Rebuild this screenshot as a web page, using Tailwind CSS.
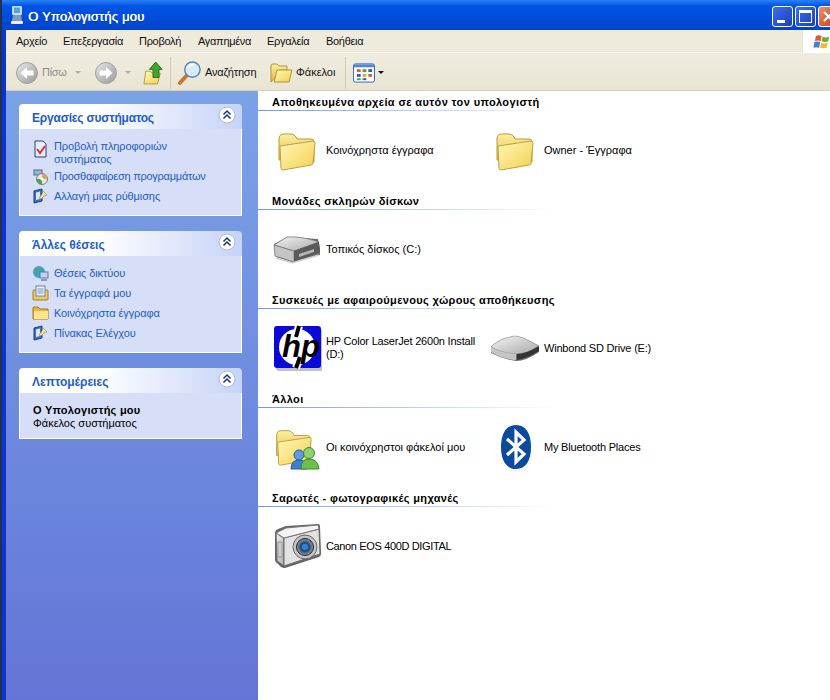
<!DOCTYPE html>
<html lang="el">
<head>
  <meta charset="UTF-8" />
  <title>Ο Υπολογιστής μου</title>
  <script src="https://cdn.jsdelivr.net/npm/@tailwindcss/browser@4"></script>
</head>
<body class="m-0 overflow-hidden bg-[#22304f] font-['Liberation_Sans',Arial,sans-serif] text-[11px] leading-[13px]">

<!-- shared gradients and icons -->
<svg class="absolute w-0 h-0">
  <defs>
    <linearGradient id="fold" x1="0" y1="0" x2="1" y2="1"><stop offset="0" stop-color="#fff8b8"/><stop offset="1" stop-color="#f4cf52"/></linearGradient>
    <linearGradient id="foldback" x1="0" y1="0" x2="0" y2="1"><stop offset="0" stop-color="#fdf0a0"/><stop offset="1" stop-color="#e0b840"/></linearGradient>
    <linearGradient id="disk" x1="0" y1="0" x2="1" y2="1"><stop offset="0" stop-color="#f4f4f4"/><stop offset="1" stop-color="#a9a9a9"/></linearGradient>
    <linearGradient id="nav" x1="0" y1="0" x2="1" y2="1"><stop offset="0" stop-color="#e8e8e8"/><stop offset="1" stop-color="#999"/></linearGradient>
    <radialGradient id="lens"><stop offset="0" stop-color="#2f7fe0"/><stop offset="0.5" stop-color="#24476f"/><stop offset="1" stop-color="#9aa3ab"/></radialGradient>
    <symbol id="folder" viewBox="0 0 48 48">
      <path d="M7 34 V13 q0-5 5-5 h7 q3 0 5 3 l1 2 h14 q3 0 3 3 v20 z" fill="url(#foldback)" stroke="#b99a36"/>
      <path d="M8 20 L41 15 q2 0 2 2 L41 37 q0 2-2 2 L11 44 q-2 0-2-2 z" fill="url(#fold)" stroke="#bfa03c"/>
    </symbol>
    <symbol id="panelapp" viewBox="0 0 16 16">
      <path d="M2 3 L10 1 V13 L2 15 z" fill="#3f6fc8" stroke="#1c3a7c"/>
      <path d="M4 4.500 L8 3.500 V11 L4 12 z" fill="#dce6f6"/>
      <path d="M7 10 L10 6 L11 3 L15 7 L12 8 L9 11 z" fill="#f4e49a" stroke="#7b8c3e" stroke-width="0.600"/>
    </symbol>
  </defs>
</svg>

<div class="w-[830px] h-[700px] ml-[2px] flex flex-col overflow-hidden">

  <!-- title bar -->
  <div class="h-[30px] shrink-0 flex items-center bg-gradient-to-b from-[#2a80f4] via-[#0054e6] via-20% to-[#0044cc] relative">
    <svg class="ml-[7px] w-[16px] h-[20px]" viewBox="0 0 16 20">
      <rect x="3" y="1" width="10" height="9" rx="1" fill="#bfe0f6"/>
      <rect x="5" y="2.500" width="6" height="5.500" fill="#5aa0e0"/>
      <path d="M4 10 h8 l1 6 h-10 z" fill="#7f9cbc"/>
      <rect x="2" y="16" width="12" height="3" rx="1" fill="#e6edf4"/>
    </svg>
    <span class="ml-[3px] mt-[2px] text-white text-[13px] leading-none tracking-[0.2px] [text-shadow:0.4px_0_0_#fff,1px_1px_0_#0f3a9c]">Ο Υπολογιστής μου</span>
    <div class="absolute left-[770px] top-[6px] flex gap-[2px]">
      <div class="w-[21px] h-[21px] rounded-[3px] border border-white bg-[linear-gradient(135deg,#3c6fe8,#1a3fc0)] relative">
        <div class="absolute left-[4px] top-[13px] w-[8px] h-[3px] bg-white"></div>
      </div>
      <div class="w-[21px] h-[21px] rounded-[3px] border border-white bg-[linear-gradient(135deg,#3c6fe8,#1a3fc0)] relative">
        <div class="absolute left-[3px] top-[3px] w-[13px] h-[13px] border border-white border-t-[3px]"></div>
      </div>
      <div class="w-[21px] h-[21px] rounded-[3px] border border-white bg-[linear-gradient(135deg,#e89070,#c63a18)] relative">
        <svg class="absolute left-[3px] top-[3px] w-[13px] h-[13px]" viewBox="0 0 13 13"><path d="M2 2 L11 11 M11 2 L2 11" stroke="#fff" stroke-width="2.200"/></svg>
      </div>
    </div>
  </div>

  <div class="flex-1 min-h-0 flex flex-col border-l-[4px] border-[#0a35d4]">

    <!-- menu bar -->
    <div class="h-[23px] shrink-0 flex items-center bg-[#efebdc] border-b border-[#f8f6ee] text-[#111] tracking-[-0.3px] relative">
      <div class="pl-[10px] w-[57px]">Αρχείο</div>
      <div class="w-[76px]">Επεξεργασία</div>
      <div class="w-[59px]">Προβολή</div>
      <div class="w-[69px]">Αγαπημένα</div>
      <div class="w-[59px]">Εργαλεία</div>
      <div>Βοήθεια</div>
      <div class="absolute left-[796px] top-0 w-[30px] h-[23px] bg-white border-l border-[#e8e4d4] flex items-center">
        <svg class="ml-[10px] w-[20px] h-[18px]" viewBox="0 0 20 18">
          <path d="M3 3 q3-2 6 0 l-1 5 q-3-1-6 0 z" fill="#e2572b"/>
          <path d="M10 3.500 q3 1.500 7 0 l-1 5 q-3 1-7 0 z" fill="#6cae34"/>
          <path d="M1.500 9 q3-1 6 0 l-1 6 q-3-1-6 0 z" fill="#3f7fd8"/>
          <path d="M8.500 10 q3 1 7 0 l-1 5 q-3 1-7 0 z" fill="#f4b92c"/>
        </svg>
      </div>
    </div>

    <!-- toolbar -->
    <div class="h-[38px] shrink-0 pt-[2px] flex items-center bg-gradient-to-b from-[#f0ede0] to-[#e9e5d4] border-b border-[#d4d0bc] text-[#111]">
      <svg class="ml-[10px] w-[22px] h-[22px]" viewBox="0 0 22 22">
        <circle cx="11" cy="11" r="10.500" fill="url(#nav)" stroke="#a0a0a0"/>
        <path d="M4.500 11 L11 5 V8.500 H17.500 V13.500 H11 V17 z" fill="#fff"/>
      </svg>
      <span class="ml-[4px] w-[30px] text-[#8d8d86] tracking-[-0.3px]">Πίσω</span>
      <svg class="ml-[3px] w-[6px] h-[4px]" viewBox="0 0 6 4"><path d="M0 0 H6 L3 3 z" fill="#b0aea0"/></svg>
      <svg class="ml-[14px] w-[22px] h-[22px]" viewBox="0 0 22 22">
        <circle cx="11" cy="11" r="10.500" fill="url(#nav)" stroke="#a0a0a0"/>
        <path d="M17.500 11 L11 5 V8.500 H4.500 V13.500 H11 V17 z" fill="#fff"/>
      </svg>
      <svg class="ml-[8px] w-[6px] h-[4px]" viewBox="0 0 6 4"><path d="M0 0 H6 L3 3 z" fill="#b0aea0"/></svg>
      <svg class="ml-[12px] w-[20px] h-[24px]" viewBox="0 0 22 26">
        <path d="M3 11 h5 l2 2 h9 l-3 12 H1 z" fill="url(#fold)" stroke="#b39432"/>
        <path d="M14 1 L21 9 H17.500 V18 H11 V9 H7 z" fill="#3fa52c" stroke="#1d6b1a"/>
      </svg>
      <div class="ml-[7px] w-px h-[32px] bg-[#cfcbb8]"></div>
      <svg class="ml-[6px] w-[25px] h-[25px]" viewBox="0 0 26 26">
        <path d="M3 24 L11 15" stroke="#c9772d" stroke-width="4" stroke-linecap="round"/>
        <circle cx="16" cy="10" r="8" fill="#d6ecfa" stroke="#5c86b4" stroke-width="1.500"/>
        <path d="M11 8 q3-4 7-3" stroke="#fff" stroke-width="2" fill="none"/>
      </svg>
      <span class="ml-[3px] w-[60px] tracking-[-0.2px]">Αναζήτηση</span>
      <svg class="ml-[4px] w-[24px] h-[22px]" viewBox="0 0 24 22">
        <path d="M2 20 V4 q0-2 2-2 h4 l2 2 h8 v4 h-6 z" fill="url(#foldback)" stroke="#b39432"/>
        <path d="M5 20 L8 8 H23 L20 20 z" fill="url(#fold)" stroke="#b39432"/>
      </svg>
      <span class="ml-[3px] w-[45px]">Φάκελοι</span>
      <div class="ml-[4px] w-px h-[32px] bg-[#cfcbb8]"></div>
      <svg class="ml-[7px] w-[22px] h-[20px]" viewBox="0 0 23 20">
        <rect x="0.500" y="0.500" width="22" height="19" rx="2" fill="#fff" stroke="#2f5fb8"/>
        <rect x="1" y="1" width="21" height="3" fill="#4f86dc"/>
        <rect x="4" y="6" width="4" height="3" fill="#d9622f"/><rect x="10" y="6" width="4" height="3" fill="#4aa83a"/><rect x="16" y="6" width="4" height="3" fill="#2f5fb8"/>
        <rect x="4" y="11" width="4" height="3" fill="#2f5fb8"/><rect x="10" y="11" width="4" height="3" fill="#e4a82c"/><rect x="16" y="11" width="4" height="3" fill="#d9622f"/>
        <rect x="4" y="15.500" width="4" height="2" fill="#4aa83a"/><rect x="10" y="15.500" width="4" height="2" fill="#2f5fb8"/>
      </svg>
      <svg class="ml-[3px] w-[6px] h-[4px]" viewBox="0 0 6 4"><path d="M0 0 H6 L3 3 z" fill="#111"/></svg>
    </div>

    <div class="flex-1 min-h-0 flex">

      <!-- task sidebar -->
      <div class="w-[252px] shrink-0 pt-[13px] pl-[13px] flex flex-col gap-[15px] bg-gradient-to-b from-[#7ba2e7] to-[#6375d6]">

        <div class="w-[223px]">
          <div class="h-[25px] flex items-center justify-between pl-[13px] pr-[6px] rounded-t-[4px] bg-gradient-to-r from-white via-white via-35% to-[#c6d3f7]">
            <span class="mt-[3px] text-[12px] font-bold text-[#215dc6] tracking-[-0.2px]">Εργασίες συστήματος</span>
            <svg class="w-[18px] h-[18px] mb-[3px]" viewBox="0 0 18 18">
              <circle cx="9" cy="9" r="8" fill="#fff" stroke="#a9b9e4"/>
              <path d="M5.500 8.500 L9 5 L12.500 8.500 M5.500 12.500 L9 9 L12.500 12.500" fill="none" stroke="#16357c" stroke-width="1.500"/>
            </svg>
          </div>
          <div class="bg-[#d6dff7] border-x border-b border-white pl-[12px] pt-[11px] pb-[9px] text-[#215dc6] tracking-[-0.1px]">
            <div class="flex h-[26px]">
              <svg class="w-[16px] h-[18px] shrink-0" viewBox="0 0 16 18">
                <path d="M3 1 h8 l3 3 v13 H3 z" fill="#e8eef8" stroke="#24407c"/>
                <path d="M5 9 L8 13 L13 6" fill="none" stroke="#d8323a" stroke-width="2"/>
              </svg>
              <span class="ml-[6px] w-[140px]">Προβολή πληροφοριών συστήματος</span>
            </div>
            <div class="flex items-center h-[20px]">
              <svg class="w-[17px] h-[17px] shrink-0" viewBox="0 0 17 17">
                <rect x="2" y="2" width="8" height="5" fill="#9cb4d8" stroke="#4e6a94"/>
                <circle cx="10" cy="11" r="5.500" fill="#e8e8f0" stroke="#6a7a94"/>
                <path d="M10 11 L10 5.500 A5.500 5.500 0 0 1 15.500 11 z" fill="#d8a848"/>
                <path d="M10 11 L4.500 11 A5.500 5.500 0 0 0 10 16.500 z" fill="#58a048"/>
                <circle cx="10" cy="11" r="1.500" fill="#fff"/>
              </svg>
              <span class="ml-[5px] tracking-[-0.25px]">Προσθαφαίρεση προγραμμάτων</span>
            </div>
            <div class="flex items-center h-[20px]">
              <svg class="w-[16px] h-[16px] shrink-0"><use href="#panelapp"/></svg>
              <span class="ml-[6px]">Αλλαγή μιας ρύθμισης</span>
            </div>
          </div>
        </div>

        <div class="w-[223px]">
          <div class="h-[25px] flex items-center justify-between pl-[13px] pr-[6px] rounded-t-[4px] bg-gradient-to-r from-white via-white via-35% to-[#c6d3f7]">
            <span class="mt-[3px] text-[12px] font-bold text-[#215dc6]">Άλλες θέσεις</span>
            <svg class="w-[18px] h-[18px] mb-[3px]" viewBox="0 0 18 18">
              <circle cx="9" cy="9" r="8" fill="#fff" stroke="#a9b9e4"/>
              <path d="M5.500 8.500 L9 5 L12.500 8.500 M5.500 12.500 L9 9 L12.500 12.500" fill="none" stroke="#16357c" stroke-width="1.500"/>
            </svg>
          </div>
          <div class="bg-[#d6dff7] border-x border-b border-white pl-[12px] pt-[7px] pb-[9px] text-[#215dc6] tracking-[-0.1px]">
            <div class="flex items-center h-[20px]">
              <svg class="w-[17px] h-[17px] shrink-0" viewBox="0 0 17 17">
                <circle cx="7" cy="7" r="6" fill="#3f9fd8"/>
                <path d="M3 3 q3 1 3 4 l-3 2 z M8 2 l3 3 -3 2 z" fill="#5aa83f"/>
                <rect x="8" y="7" width="8" height="6" fill="#bcd4f0" stroke="#5a7ca8"/>
                <rect x="9" y="14" width="6" height="2" fill="#8a96b4"/>
              </svg>
              <span class="ml-[5px]">Θέσεις δικτύου</span>
            </div>
            <div class="flex items-center h-[20px]">
              <svg class="w-[17px] h-[16px] shrink-0" viewBox="0 0 17 16">
                <rect x="1" y="5" width="15" height="10" rx="1" fill="#f0c860" stroke="#a07c28"/>
                <rect x="4" y="1" width="9" height="10" fill="#f0f4fa" stroke="#6a84a8"/>
                <path d="M5.500 4 h6 M5.500 6 h6 M5.500 8 h6" stroke="#6a94c8"/>
              </svg>
              <span class="ml-[5px]">Τα έγγραφά μου</span>
            </div>
            <div class="flex items-center h-[20px]">
              <svg class="w-[17px] h-[14px] shrink-0" viewBox="0 0 17 14">
                <path d="M1 13 V2 q0-1 1-1 h4 l2 2 h8 v10 z" fill="#e8b83c" stroke="#9a7820"/>
                <rect x="2" y="5" width="14" height="8" fill="#fbe48c"/>
              </svg>
              <span class="ml-[5px]">Κοινόχρηστα έγγραφα</span>
            </div>
            <div class="flex items-center h-[20px]">
              <svg class="w-[16px] h-[16px] shrink-0"><use href="#panelapp"/></svg>
              <span class="ml-[6px]">Πίνακας Ελέγχου</span>
            </div>
          </div>
        </div>

        <div class="w-[223px]">
          <div class="h-[25px] flex items-center justify-between pl-[13px] pr-[6px] rounded-t-[4px] bg-gradient-to-r from-white via-white via-35% to-[#c6d3f7]">
            <span class="mt-[3px] text-[12px] font-bold text-[#215dc6]">Λεπτομέρειες</span>
            <svg class="w-[18px] h-[18px] mb-[3px]" viewBox="0 0 18 18">
              <circle cx="9" cy="9" r="8" fill="#fff" stroke="#a9b9e4"/>
              <path d="M5.500 8.500 L9 5 L12.500 8.500 M5.500 12.500 L9 9 L12.500 12.500" fill="none" stroke="#16357c" stroke-width="1.500"/>
            </svg>
          </div>
          <div class="bg-[#d6dff7] border-x border-b border-white pl-[13px] pt-[11px] pb-[8px] text-black">
            <div class="font-bold tracking-[0.25px]">Ο Υπολογιστής μου</div>
            <div>Φάκελος συστήματος</div>
          </div>
        </div>
      </div>

      <!-- drive list -->
      <div class="flex-1 bg-white text-black">

        <section class="h-[99px]">
          <div class="h-[19px] pl-[14px] pt-[5px] font-bold tracking-[0.38px]">Αποθηκευμένα αρχεία σε αυτόν τον υπολογιστή</div>
          <div class="h-px w-[297px] bg-gradient-to-r from-[#6f9cd8] to-white"></div>
          <div class="flex mt-[15px] pl-[14px]">
            <div class="w-[218px] h-[48px] flex items-center">
              <svg class="w-[48px] h-[48px] shrink-0"><use href="#folder"/></svg>
              <span class="ml-[6px] w-[156px]">Κοινόχρηστα έγγραφα</span>
            </div>
            <div class="w-[218px] h-[48px] flex items-center">
              <svg class="w-[48px] h-[48px] shrink-0"><use href="#folder"/></svg>
              <span class="ml-[6px] w-[156px]">Owner - Έγγραφα</span>
            </div>
          </div>
        </section>

        <section class="h-[99px]">
          <div class="h-[19px] pl-[14px] pt-[5px] font-bold tracking-[0.35px]">Μονάδες σκληρών δίσκων</div>
          <div class="h-px w-[297px] bg-gradient-to-r from-[#6f9cd8] to-white"></div>
          <div class="flex mt-[15px] pl-[14px]">
            <div class="w-[218px] h-[48px] flex items-center">
              <svg class="w-[50px] h-[48px] shrink-0" viewBox="0 0 50 48">
                <path d="M2 19 L16 12 L46 14 L48 24 L48 30 L20 37 L4 32 z" fill="#6c6c6c"/>
                <path d="M2 20 L15 12 Q30 11 47 17 L22 26 z" fill="url(#disk)" stroke="#777" stroke-width="0.800"/>
                <path d="M2 20 L22 26 V37 L3 31 z" fill="#c4c4c4" stroke="#777" stroke-width="0.800"/>
                <path d="M22 26 L47 17 L48 27 L22 37 z" fill="#5a5a5a"/>
                <path d="M27 29 L42 24 V27 L27 32 z" fill="#b4b4b4"/>
                <path d="M4 33 L20 38 L47 30" fill="none" stroke="#d0d0d0" stroke-width="1.500"/>
              </svg>
              <span class="ml-[4px] w-[156px]">Τοπικός δίσκος (C:)</span>
            </div>
          </div>
        </section>

        <section class="h-[99px]">
          <div class="h-[19px] pl-[14px] pt-[5px] font-bold tracking-[0.35px]">Συσκευές με αφαιρούμενους χώρους αποθήκευσης</div>
          <div class="h-px w-[297px] bg-gradient-to-r from-[#6f9cd8] to-white"></div>
          <div class="flex mt-[15px] pl-[14px]">
            <div class="w-[218px] h-[48px] flex items-center">
              <svg class="w-[50px] h-[46px] shrink-0" viewBox="0 0 50 46">
                <rect x="4" y="4" width="47" height="42" rx="3" fill="#9a9a9a" opacity="0.600"/>
                <rect x="2" y="1" width="47" height="42" rx="3" fill="#0a0ad8"/>
                <circle cx="25" cy="22" r="18" fill="#fff"/>
                <path d="M27 1 L24 12 M28 32 L24 43" stroke="#fff" stroke-width="8"/>
                <path d="M27 1 L24 12 M28 32 L24 43" stroke="#000" stroke-width="4"/>
                <text x="10" y="32" font-family="Liberation Sans" font-weight="700" font-style="italic" font-size="31" fill="#000">hp</text>
              </svg>
              <span class="ml-[4px] w-[156px] tracking-[-0.2px]">HP Color LaserJet 2600n Install (D:)</span>
            </div>
            <div class="w-[218px] h-[48px] flex items-center">
              <svg class="w-[50px] h-[48px] shrink-0" viewBox="0 0 50 48">
                <path d="M1 23 Q8 15 24 12 Q30 11 49 22 L49 28 Q36 37 26 37 Q12 35 1 29 z" fill="#6e6e6e"/>
                <path d="M1 23 Q8 15 24 12 Q30 11 49 22 Q36 30 26 30 Q12 29 1 23 z" fill="url(#disk)" stroke="#888" stroke-width="0.500"/>
                <path d="M1 23 Q12 29 26 30 V36 Q12 35 1 28 z" fill="#c4c4c4"/>
                <path d="M27 30 Q36 30 49 22 V27 Q36 35 27 36 z" fill="#333"/>
              </svg>
              <span class="ml-[4px] w-[156px] tracking-[-0.2px]">Winbond SD Drive (E:)</span>
            </div>
          </div>
        </section>

        <section class="h-[99px]">
          <div class="h-[19px] pl-[14px] pt-[5px] font-bold tracking-[0.35px]">Άλλοι</div>
          <div class="h-px w-[297px] bg-gradient-to-r from-[#6f9cd8] to-white"></div>
          <div class="flex mt-[15px] pl-[14px]">
            <div class="w-[218px] h-[48px] flex items-center">
              <svg class="w-[50px] h-[48px] shrink-0" viewBox="0 0 50 48">
                <use href="#folder" x="-2" y="0" width="46" height="46"/>
                <circle cx="27" cy="32" r="5" fill="#5b9be0" stroke="#2a5a9c"/>
                <path d="M19 46 q0-9 8-9 q8 0 8 9 z" fill="#3f7fd0" stroke="#2a5a9c"/>
                <circle cx="37" cy="30" r="5.500" fill="#8fd070" stroke="#3f8a2c"/>
                <path d="M29 46 q0-10 8-10 q9 0 10 10 z" fill="#6cc04c" stroke="#3f8a2c"/>
              </svg>
              <span class="ml-[4px] w-[156px]">Οι κοινόχρηστοι φάκελοί μου</span>
            </div>
            <div class="w-[218px] h-[48px] flex items-center">
              <svg class="w-[48px] h-[46px] ml-[2px] shrink-0" viewBox="0 0 48 46">
                <path d="M24 1 C34 1 39 10 39 23 C39 36 34 45 24 45 C14 45 9 36 9 23 C9 10 14 1 24 1 z" fill="#0c4a9e"/>
                <path d="M15 15 L32 30 L24 38 V8 L32 16 L15 31" fill="none" stroke="#fff" stroke-width="3.200"/>
              </svg>
              <span class="ml-[4px] w-[156px] tracking-[-0.2px]">My Bluetooth Places</span>
            </div>
          </div>
        </section>

        <section class="h-[99px]">
          <div class="h-[19px] pl-[14px] pt-[5px] font-bold tracking-[0.35px]">Σαρωτές - φωτογραφικές μηχανές</div>
          <div class="h-px w-[297px] bg-gradient-to-r from-[#6f9cd8] to-white"></div>
          <div class="flex mt-[15px] pl-[14px]">
            <div class="w-[218px] h-[48px] flex items-center">
              <svg class="w-[50px] h-[46px] shrink-0" viewBox="0 0 50 46">
                <path d="M3 10 Q3 7 6 6 L14 3 L46 1 Q48 1 48 3 L49 31 Q49 33 47 34 L13 45 Q11 45 9 44 L5 40 Q3 39 3 37 z" fill="#666"/>
                <path d="M4 10 L12 15 L12 43 L5 38 z" fill="url(#disk)" stroke="#666" stroke-linejoin="round"/>
                <path d="M12 15 L47 6 L48 31 L12 43 z" fill="#e2e2e2" stroke="#666" stroke-linejoin="round"/>
                <path d="M4 10 L14 5 L46 2 L47 6 L12 15 z" fill="#f4f4f4" stroke="#777" stroke-linejoin="round"/>
                <rect x="6" y="19" width="4" height="15" fill="#cfcfcf" stroke="#999"/>
                <circle cx="33" cy="24" r="12" fill="#c4c4c4" stroke="#666"/>
                <circle cx="33" cy="24" r="8.500" fill="url(#lens)" stroke="#222"/>
                <circle cx="33" cy="24" r="3" fill="#2f7fe0"/>
              </svg>
              <span class="ml-[4px] w-[156px] tracking-[-0.36px]">Canon EOS 400D DIGITAL</span>
            </div>
          </div>
        </section>
      </div>
    </div>
  </div>
</div>
</body>
</html>
